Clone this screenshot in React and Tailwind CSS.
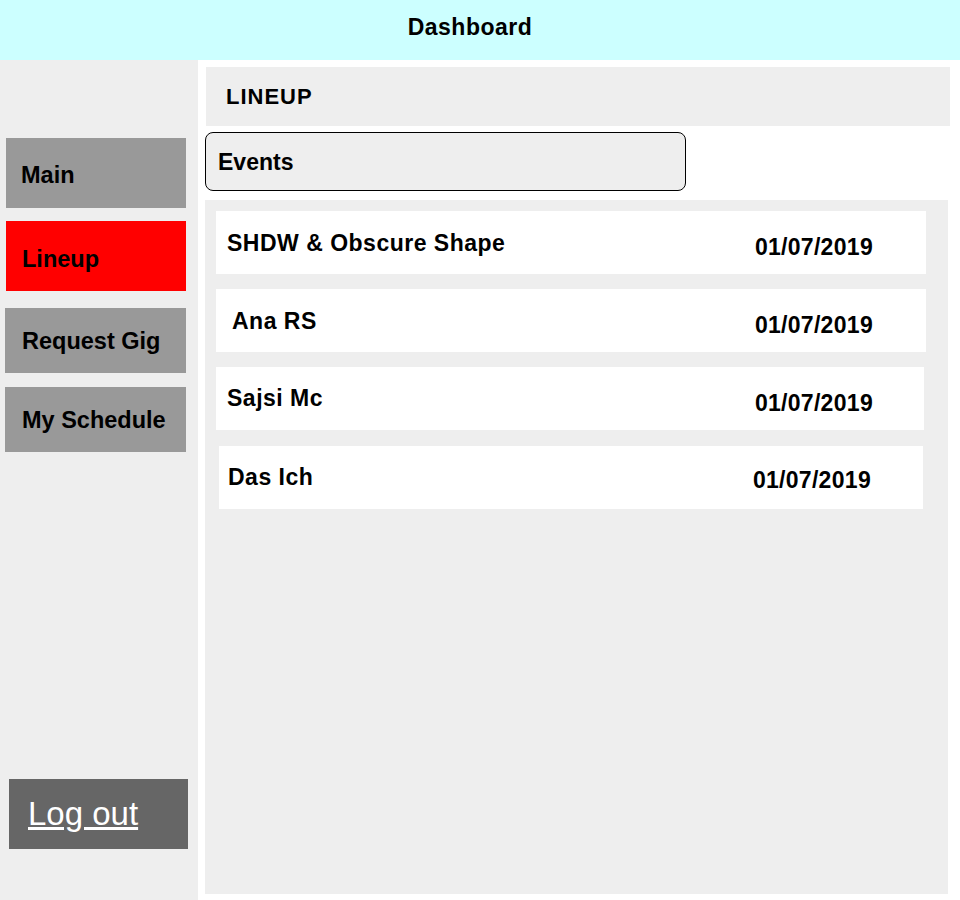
import React from 'react';

const NAV = [
  { label: 'Main', cls: 'bg-[#999999] ml-[6px] w-[180px] h-[70px] mt-[78px] pl-[15px] pt-[3px]' },
  { label: 'Lineup', cls: 'bg-[#ff0000] ml-[6px] w-[180px] h-[70px] mt-[13px] pl-[16px] pt-[6px]' },
  { label: 'Request Gig', cls: 'bg-[#999999] ml-[5px] w-[181px] h-[65px] mt-[17px] pl-[17px] pt-[1px]' },
  { label: 'My Schedule', cls: 'bg-[#999999] ml-[5px] w-[181px] h-[65px] mt-[14px] pl-[17px] pt-[1px]' }
];

const LINEUP = [
  { name: 'SHDW & Obscure Shape', date: '01/07/2019', row: 'mt-[11px] ml-[11px] w-[710px]', nameCls: 'pl-[11px] pt-[20px]', dateCls: 'pt-[24px] mr-[53px]' },
  { name: 'Ana RS', date: '01/07/2019', row: 'mt-[15px] ml-[11px] w-[710px]', nameCls: 'pl-[16px] pt-[20px]', dateCls: 'pt-[24px] mr-[53px]' },
  { name: 'Sajsi Mc', date: '01/07/2019', row: 'mt-[15px] ml-[11px] w-[708px]', nameCls: 'pl-[11px] pt-[19px]', dateCls: 'pt-[24px] mr-[51px]' },
  { name: 'Das Ich', date: '01/07/2019', row: 'mt-[16px] ml-[14px] w-[704px]', nameCls: 'pl-[9px] pt-[19px]', dateCls: 'pt-[22px] mr-[52px]' }
];

export default function App() {
  return (
    <div className="w-[960px] h-[900px] bg-white flex flex-col text-black font-['Liberation_Sans',Arial,sans-serif]">
      <div className="h-[60px] bg-[#ccffff] flex items-center justify-center pr-[20px] pb-[6px]">
        <span className="text-[23px] leading-[24px] font-bold tracking-[0.5px]">Dashboard</span>
      </div>

      <div className="flex flex-1">
        {/* sidebar */}
        <div className="w-[198px] bg-[#eeeeee] flex flex-col">
          {NAV.map(item => (
            <div key={item.label} className={`flex items-center ${item.cls}`}>
              <span className="text-[23.5px] leading-[26px] font-bold">{item.label}</span>
            </div>
          ))}
          <div className="mt-auto mb-[51px] ml-[9px] w-[179px] h-[70px] bg-[#666666] flex items-center pl-[19px]">
            <a href="#" className="text-[33px] leading-[36px] text-white underline">Log out</a>
          </div>
        </div>

        {/* content */}
        <div className="flex-1 flex flex-col pt-[7px] pl-[7px] pr-[10px]">
          <div className="ml-[1px] h-[59px] bg-[#eeeeee] flex items-center pl-[20px] pt-[1px]">
            <span className="text-[22px] leading-[24px] font-bold tracking-[1px]">LINEUP</span>
          </div>

          <div className="mt-[6px] w-[481px] h-[59px] bg-[#eeeeee] border border-black rounded-[8px] flex items-center pl-[12px]">
            <span className="text-[23px] leading-[26px] font-bold">Events</span>
          </div>

          <div className="mt-[9px] mr-[2px] h-[694px] bg-[#eeeeee] flex flex-col">
            {LINEUP.map(row => (
              <div key={row.name} className={`h-[63px] bg-white flex justify-between items-start ${row.row}`}>
                <span className={`text-[23px] leading-[24px] font-bold tracking-[0.5px] ${row.nameCls}`}>{row.name}</span>
                <span className={`text-[23px] leading-[24px] font-bold tracking-[0.3px] ${row.dateCls}`}>{row.date}</span>
              </div>
            ))}
          </div>
        </div>
      </div>
    </div>
  );
}
